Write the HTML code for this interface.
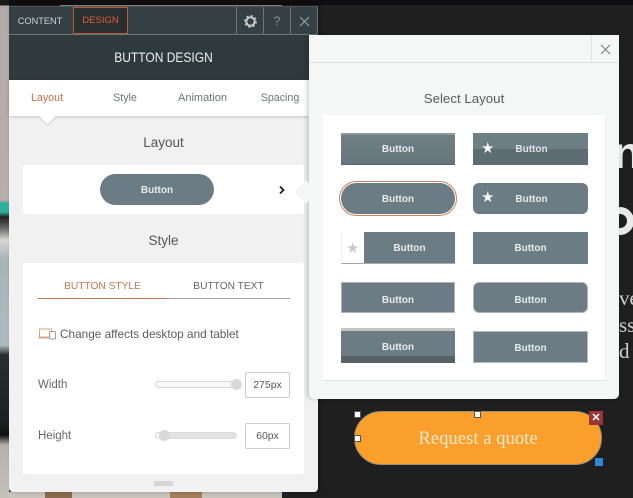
<!DOCTYPE html>
<html><head><meta charset="utf-8">
<style>
*{box-sizing:border-box}
html,body{margin:0;padding:0;width:633px;height:498px;overflow:hidden;background:#1f1f1f;font-family:"Liberation Sans",sans-serif}
.a{position:absolute}
.t{position:absolute;white-space:nowrap;text-align:center}
.b{position:absolute;background:#6c7c84;color:#e6ebee;font-size:10px;font-weight:bold;display:flex;align-items:center;justify-content:center;padding-top:2px}
.star{position:absolute;font-size:15px;line-height:15px;color:#f4f6f7;font-weight:normal}
.h{position:absolute;width:8px;height:8px;background:#fff;border:1px solid #555}
</style></head><body>

<!-- background -->
<div class="a" style="left:0;top:0;width:633px;height:5px;background:#0e0e10"></div>
<div class="a" style="left:60px;top:5px;width:222px;height:1px;background:#8d8d8d"></div>
<div class="a" style="left:0;top:0;width:9px;height:498px;background:linear-gradient(#1a1a1c 0,#1a1a1c 5px,#b3a9a8 6px,#b8aead 198px,#a9aaa8 201px,#2faf9a 203px,#32b09b 212px,#222 217px,#666 228px,#d7d5d2 240px,#a8b4b8 260px,#adbbc0 345px,#2a2e2e 355px,#1b2020 425px,#111 435px,#b5b1ab 445px,#c4c0ba 498px)"></div>
<div class="a" style="left:9px;top:492px;width:273px;height:6px;background:#c9c4bc"></div>
<div class="a" style="left:45px;top:492px;width:27px;height:6px;background:#8b6c4e"></div>
<div class="a" style="left:170px;top:492px;width:32px;height:6px;background:#a37e5c"></div>
<div class="a" style="left:282px;top:490px;width:351px;height:8px;background:#1f1f1f"></div>

<!-- right peeking text -->
<div class="a" style="left:613px;top:138px;width:20px;height:30px;overflow:hidden"><div class="a" style="left:0;top:0;font:bold 46px/30px 'Liberation Sans',sans-serif;color:#e9e9e9">n</div></div>
<div class="a" style="left:619px;top:205px;width:14px;height:34px;overflow:hidden"><div class="a" style="left:-13px;top:2px;width:28px;height:28px;border:7px solid #e9e9e9;border-radius:50%"></div></div>
<div class="t" style="left:619px;top:288px;font:21px/20px 'Liberation Serif',serif;color:#cfcfcf">ve</div>
<div class="t" style="left:619px;top:315px;font:21px/20px 'Liberation Serif',serif;color:#cfcfcf">ss</div>
<div class="t" style="left:619px;top:341px;font:21px/20px 'Liberation Serif',serif;color:#cfcfcf">d t</div>

<!-- orange button -->
<div class="a" style="left:354px;top:411px;width:248px;height:54px;border-radius:27px;background:#fb9f2c;border:1px solid #9a8f7d"></div>
<div class="t" style="left:354px;top:429px;width:248px;font:18.700px/20px 'Liberation Serif',serif;color:#fdeacb">Request a quote</div>
<div class="h" style="left:354px;top:411px;width:7px;height:7px"></div>
<div class="h" style="left:474px;top:411px;width:7px;height:7px"></div>
<div class="h" style="left:354px;top:435px;width:7px;height:7px"></div>
<div class="a" style="left:589px;top:411px;width:14px;height:14px;background:#9b3434;color:#fff;font:bold 11px/14px 'Liberation Sans',sans-serif;text-align:center">✕</div>
<div class="a" style="left:595px;top:458px;width:8px;height:8px;background:#2f88d6"></div>

<!-- left panel -->
<div class="a" style="left:9px;top:6px;width:309px;height:486px;background:#f1f1f1;border-radius:0 0 4px 4px;box-shadow:2px 0 4px rgba(0,0,0,.25)"></div>
<div class="a" style="left:9px;top:6px;width:309px;height:29px;background:#344044;border-top:1px solid #4c5659;border-bottom:1px solid #6e7678"></div>
<div class="t" style="left:8px;top:14px;width:64px;font-size:9.200px;line-height:14px;color:#cfd3d4">CONTENT</div>
<div class="a" style="left:73px;top:7px;width:55px;height:27px;background:#2b2f30;border:1px solid #b5593a"></div>
<div class="t" style="left:73px;top:14px;width:55px;font-size:9.500px;line-height:14px;color:#d9603a">DESIGN</div>
<div class="a" style="left:236px;top:7px;width:1px;height:27px;background:#6e7678"></div>
<div class="a" style="left:263px;top:7px;width:1px;height:27px;background:#6e7678"></div>
<div class="a" style="left:290px;top:7px;width:1px;height:27px;background:#6e7678"></div>
<div class="a" style="left:317px;top:7px;width:1px;height:27px;background:#6e7678"></div>
<svg class="a" style="left:243px;top:14px" width="15" height="15" viewBox="0 0 15 15"><circle cx="7.500" cy="7.500" r="4.200" fill="none" stroke="#c9cdcd" stroke-width="2"/><circle cx="7.500" cy="7.500" r="5.800" fill="none" stroke="#c9cdcd" stroke-width="1.200" stroke-dasharray="2.200 2.350"/></svg>
<div class="t" style="left:264px;top:14px;width:26px;font-size:12px;line-height:14px;color:#8f9698">?</div>
<svg class="a" style="left:298px;top:15px" width="13" height="13" viewBox="0 0 13 13"><path d="M2 2 11 11M11 2 2 11" stroke="#a3a9aa" stroke-width="1"/></svg>

<div class="a" style="left:9px;top:35px;width:300px;height:45px;background:#2f3a3d"></div>
<div class="t" style="left:9px;top:50px;width:309px;font-size:13.500px;line-height:16px;color:#eef0f0;transform:scaleX(.89)">BUTTON DESIGN</div>

<div class="a" style="left:9px;top:80px;width:300px;height:36px;background:#fff;box-shadow:0 1px 3px rgba(0,0,0,.18)"></div>
<div class="a" style="left:42px;top:111px;width:11px;height:11px;background:#fff;transform:rotate(45deg);box-shadow:1px 1px 2px rgba(0,0,0,.12)"></div>
<div class="t" style="left:17px;top:91px;width:60px;font-size:10.700px;line-height:14px;color:#c96f4c">Layout</div>
<div class="t" style="left:95px;top:91px;width:60px;font-size:10.700px;line-height:14px;color:#6f7476">Style</div>
<div class="t" style="left:172.500px;top:91px;width:60px;font-size:11px;line-height:14px;color:#6f7476">Animation</div>
<div class="t" style="left:250px;top:91px;width:60px;font-size:10.700px;line-height:14px;color:#6f7476">Spacing</div>

<div class="t" style="left:9px;top:134px;width:309px;font-size:13.500px;line-height:17px;color:#555">Layout</div>
<div class="a" style="left:23px;top:165px;width:281px;height:49px;background:#fff;border-radius:2px"></div>
<div class="b" style="left:100px;top:174px;width:114px;height:31px;border-radius:16px">Button</div>
<svg class="a" style="left:278px;top:185px" width="8" height="10" viewBox="0 0 8 10"><path d="M2 1.500 5.500 5 2 8.500" fill="none" stroke="#222" stroke-width="1.800"/></svg>

<div class="t" style="left:9px;top:232px;width:309px;font-size:13.500px;line-height:17px;color:#555">Style</div>
<div class="a" style="left:23px;top:263px;width:281px;height:211px;background:#fff;border-radius:2px"></div>
<div class="t" style="left:38px;top:280px;width:129px;font-size:10.200px;line-height:14px;color:#c4764f">BUTTON STYLE</div>
<div class="t" style="left:167px;top:280px;width:123px;font-size:10.200px;line-height:14px;color:#666">BUTTON TEXT</div>
<div class="a" style="left:38px;top:298px;width:129px;height:1px;background:#c9764f"></div>
<div class="a" style="left:167px;top:298px;width:123px;height:1px;background:#a0a0a0"></div>

<svg class="a" style="left:38px;top:328px" width="18" height="12" viewBox="0 0 18 12"><path d="M1.500 1H13.500V9H1.500ZM0 10H11" fill="none" stroke="#d9a588" stroke-width="1"/><rect x="11.500" y="3.500" width="6" height="7.500" rx="1" fill="#fff" stroke="#a89a90" stroke-width="1"/></svg>
<div class="t" style="left:60px;top:326px;font-size:11.800px;line-height:16px;color:#5c5c5c">Change affects desktop and tablet</div>

<div class="t" style="left:38px;top:377px;font-size:11.500px;line-height:16px;color:#666">Width</div>
<div class="a" style="left:155px;top:381px;width:82px;height:7px;background:#f8f8f8;border:1px solid #d8d8d8;border-radius:4px"></div>
<div class="a" style="left:231px;top:379px;width:11px;height:11px;background:#d9d9d9;border-radius:50%"></div>
<div class="a" style="left:245px;top:372px;width:45px;height:26px;border:1px solid #ccc;border-radius:2px;background:#fff;font-size:10.500px;line-height:25px;text-align:center;color:#555">275px</div>

<div class="t" style="left:38px;top:428px;font-size:11.500px;line-height:16px;color:#666">Height</div>
<div class="a" style="left:155px;top:432px;width:82px;height:7px;background:#e3e3e3;border:1px solid #ddd;border-radius:4px"></div>
<div class="a" style="left:155px;top:432px;width:8px;height:7px;background:#f8f8f8;border:1px solid #d8d8d8;border-radius:4px 0 0 4px"></div>
<div class="a" style="left:159px;top:430px;width:11px;height:11px;background:#d9d9d9;border-radius:50%"></div>
<div class="a" style="left:245px;top:423px;width:45px;height:26px;border:1px solid #ccc;border-radius:2px;background:#fff;font-size:10.500px;line-height:25px;text-align:center;color:#555">60px</div>

<div class="a" style="left:154px;top:481px;width:19px;height:5px;background:#d6d6d6"></div>

<!-- popup -->
<div class="a" style="left:309px;top:35px;width:310px;height:364px;background:#f5f7f7;border-radius:0 0 5px 5px;box-shadow:-2px 0 5px rgba(0,0,0,.18)"></div>
<div class="a" style="left:309px;top:62px;width:310px;height:1px;background:#d9dcdc"></div>
<div class="a" style="left:591px;top:35px;width:1px;height:27px;background:#dfe2e2"></div>
<svg class="a" style="left:599px;top:43px" width="13" height="13" viewBox="0 0 13 13"><path d="M2 2 11 11M11 2 2 11" stroke="#777" stroke-width="1"/></svg>
<div class="a" style="left:298px;top:184px;width:16px;height:16px;background:#f5f7f7;transform:rotate(45deg)"></div>
<div class="t" style="left:309px;top:90px;width:310px;font-size:13.300px;line-height:17px;color:#5c5c5c">Select Layout</div>
<div class="a" style="left:323px;top:115px;width:283px;height:266px;background:#fff;border-bottom:1px solid #e2e4e4;border-right:1px solid #eceeee"></div>

<div class="b" style="left:341px;top:133px;width:114px;height:32px;border-top:2px solid #8b979c;border-bottom:1px solid #566268;background:linear-gradient(#6f7f86,#66767d);padding-top:0">Button</div>

<div class="b" style="left:473px;top:133px;width:115px;height:32px;background:linear-gradient(#6e7e85 0,#6e7e85 50%,#5d6c72 50%,#5d6c72 100%);padding-left:2px;padding-top:0;color:#dfe5e8">Button</div>
<div class="star" style="left:481px;top:141px">★</div>

<div class="a" style="left:339px;top:181px;width:118px;height:35px;border-radius:18px;border:1px solid #d28058;background:#fff"></div>
<div class="b" style="left:341px;top:183px;width:114px;height:31px;border-radius:16px">Button</div>

<div class="b" style="left:473px;top:183px;width:115px;height:31px;border-radius:6px;padding-left:2px">Button</div>
<div class="star" style="left:481px;top:190px">★</div>

<div class="a" style="left:341px;top:232px;width:23px;height:32px;background:#fff;border-bottom:1px solid #9ea6aa;border-left:1px solid #f0f0f0"></div>
<div class="star" style="left:346px;top:241px;color:#c8cacb">★</div>
<div class="b" style="left:364px;top:232px;width:91px;height:32px;border-bottom:1px solid #a5adb0">Button</div>

<div class="b" style="left:473px;top:232px;width:115px;height:32px;padding-top:0">Button</div>

<div class="b" style="left:341px;top:282px;width:114px;height:31px;border:1px solid #adb5b8;padding-top:6px">Button</div>
<div class="b" style="left:473px;top:282px;width:115px;height:31px;border:1px solid #adb5b8;border-radius:6px;padding-top:6px">Button</div>

<div class="b" style="left:341px;top:328px;width:114px;height:35px;border-top:3px solid #c4c5c1;background:linear-gradient(#6c7c84 0,#6c7c84 78%,#566268 78%,#566268 100%);padding-top:1px;padding-bottom:1px">Button</div>
<div class="b" style="left:473px;top:331px;width:115px;height:32px;border:1px solid #b5bcbf">Button</div>

</body></html>
